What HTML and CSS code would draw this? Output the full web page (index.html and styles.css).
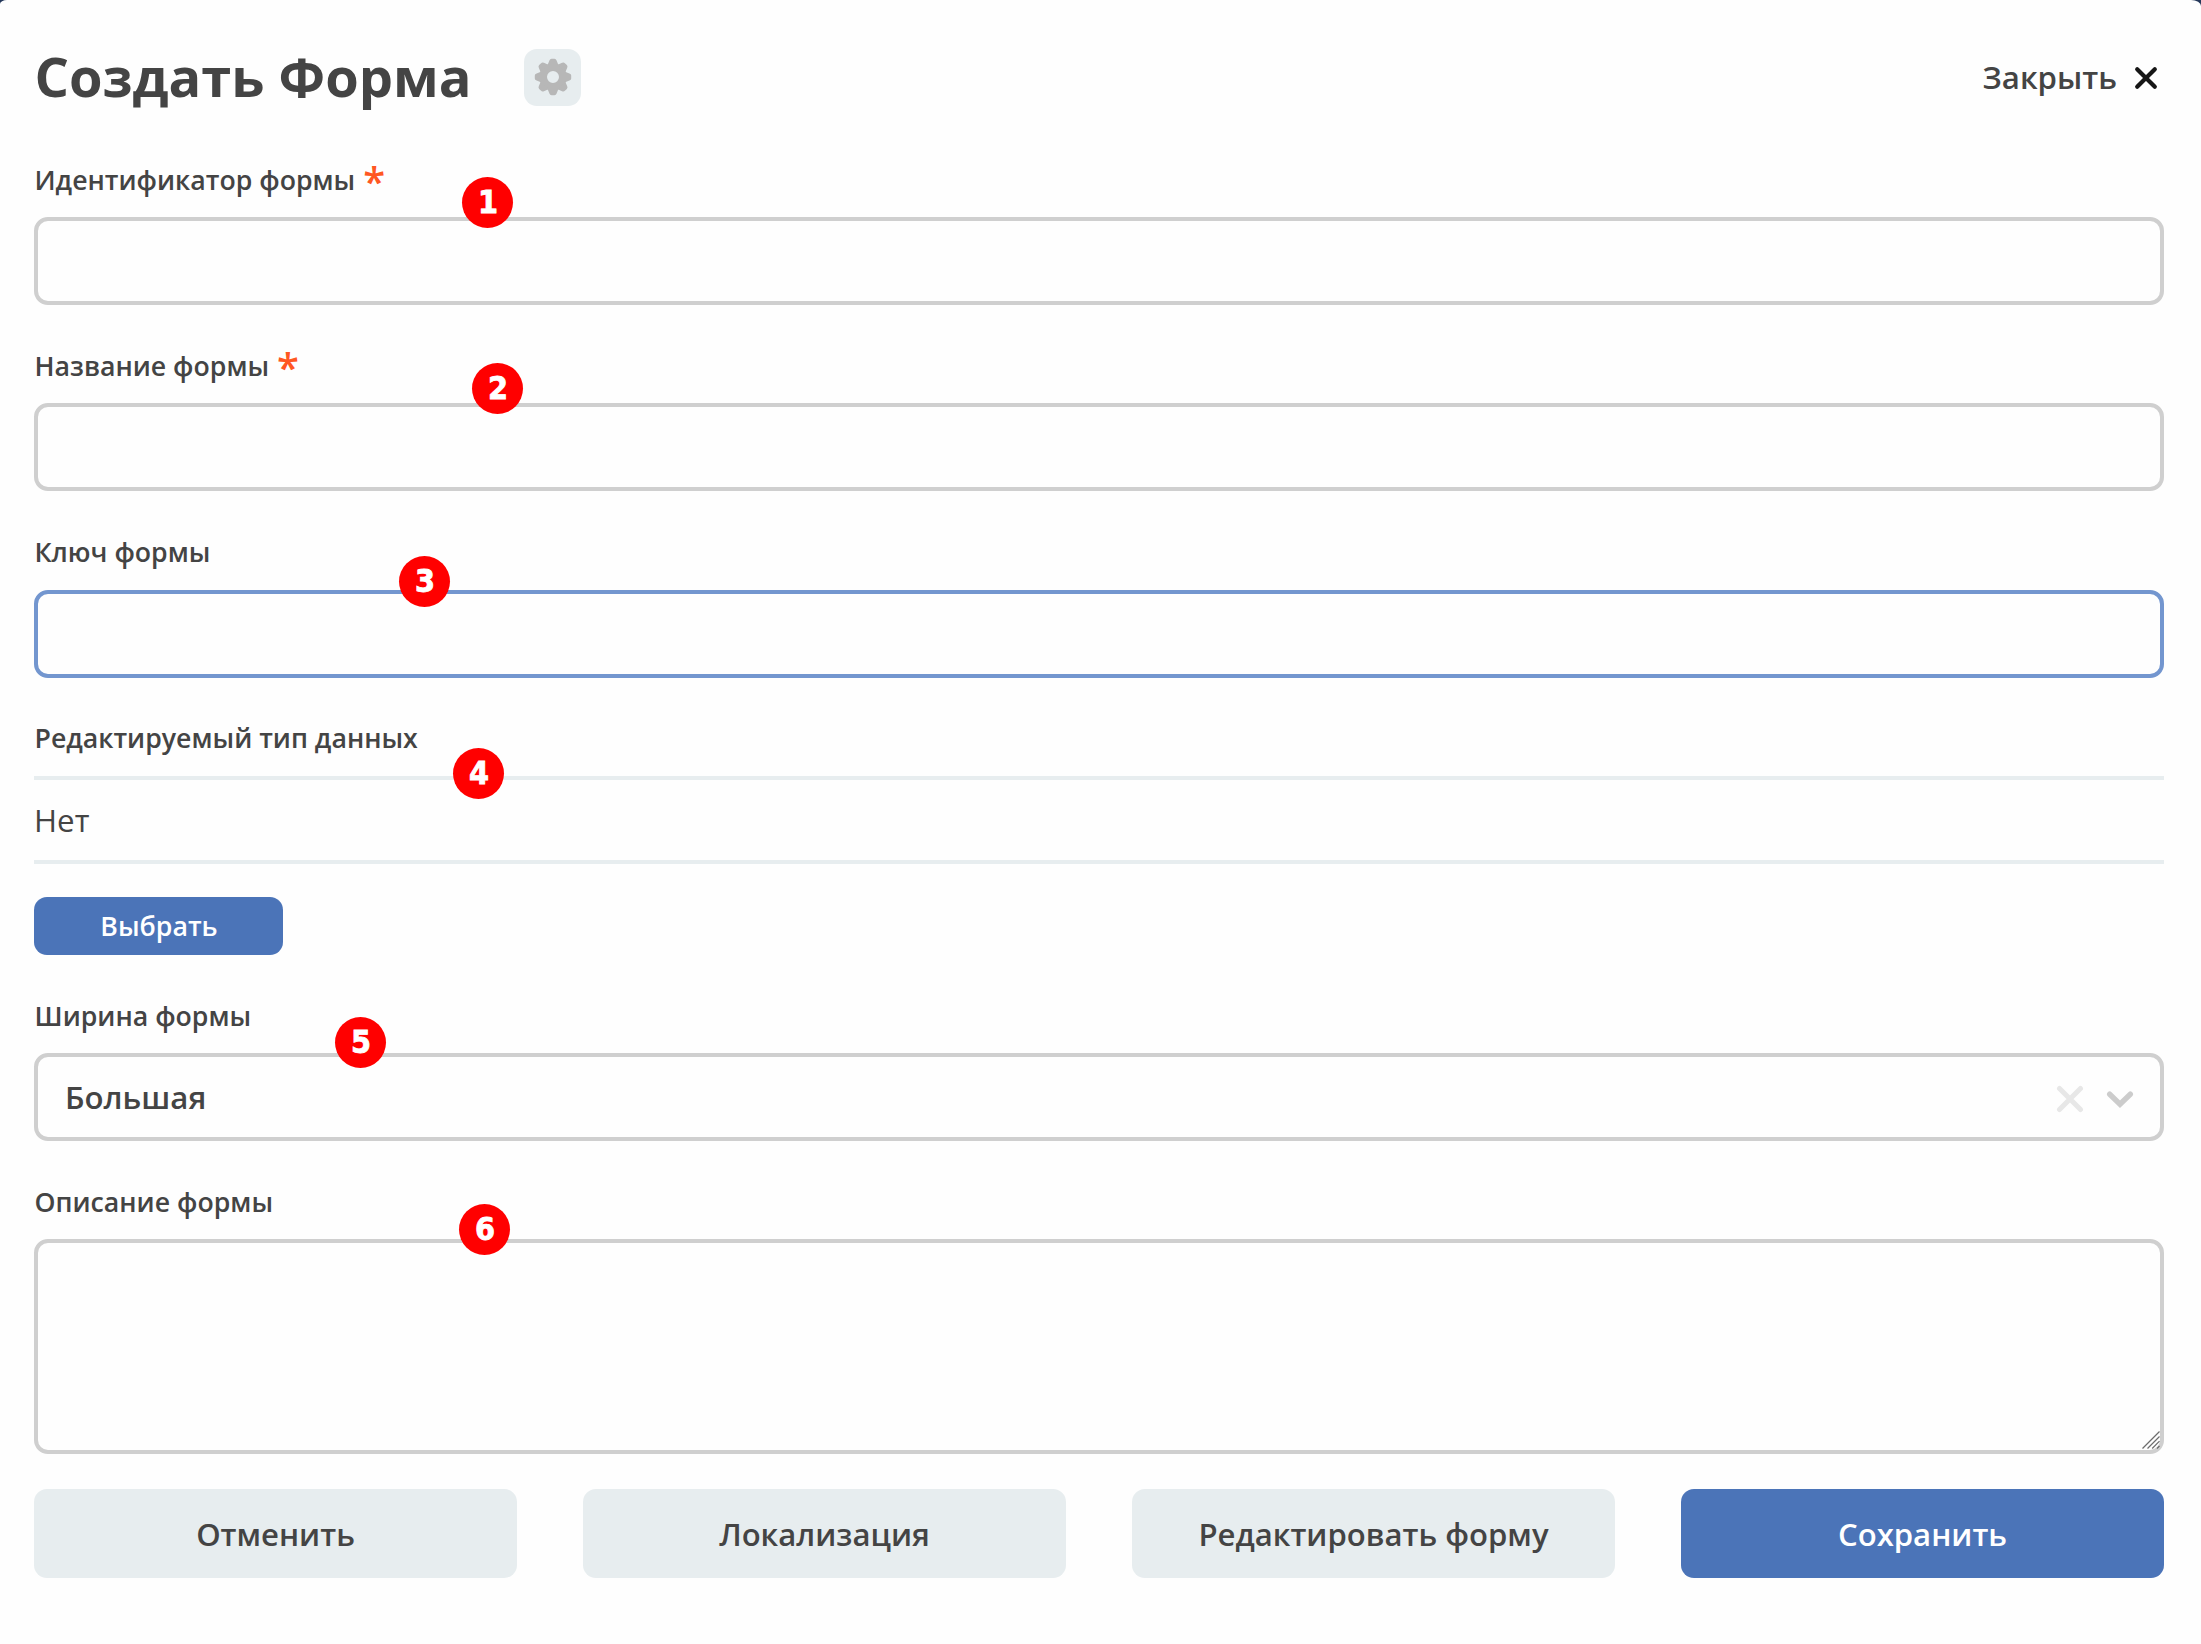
FILE: index.html
```html
<!DOCTYPE html>
<html lang="ru">
<head>
<meta charset="utf-8">
<title>Создать Форма</title>
<link rel="stylesheet" href="styles.css">
</head>
<body>
<main class="dialog">
  <header class="header">
    <h1 class="title">Создать Форма</h1>
    <button class="gear" type="button" aria-label="Настройки">
      <svg width="38" height="38" viewBox="-19 -19 38 38" fill="#b7b7b7">
        <defs><path id="tooth" d="M-5.6 -11.5 L-3.6 -16.4 Q-3 -18.2 -1.4 -18.2 H1.4 Q3 -18.2 3.6 -16.4 L5.6 -11.5 Z"/></defs>
        <circle r="9.8" fill="none" stroke="#b7b7b7" stroke-width="7.6"/>
        <use href="#tooth"/>
        <use href="#tooth" transform="rotate(45)"/>
        <use href="#tooth" transform="rotate(90)"/>
        <use href="#tooth" transform="rotate(135)"/>
        <use href="#tooth" transform="rotate(180)"/>
        <use href="#tooth" transform="rotate(225)"/>
        <use href="#tooth" transform="rotate(270)"/>
        <use href="#tooth" transform="rotate(315)"/>
      </svg>
    </button>
    <button class="close" type="button"><span class="close-text">Закрыть</span>
      <svg width="24" height="24" viewBox="0 0 24 24" fill="none" stroke="#161616" stroke-width="4.2" stroke-linecap="round"><path d="M3.2 3.2 20.8 20.8M20.8 3.2 3.2 20.8"/></svg>
    </button>
  </header>

  <section class="field">
    <label class="label" for="form-id">Идентификатор формы<span class="required">*</span></label>
    <input class="control" id="form-id" type="text">
  </section>
  <section class="field">
    <label class="label" for="form-name">Название формы<span class="required">*</span></label>
    <input class="control" id="form-name" type="text">
  </section>
  <section class="field field-key">
    <label class="label" for="form-key">Ключ формы</label>
    <input class="control control-active" id="form-key" type="text">
  </section>
  <section class="field field-type">
    <span class="label">Редактируемый тип данных</span>
    <div class="value">Нет</div>
    <button class="choose" type="button">Выбрать</button>
  </section>
  <section class="field">
    <span class="label">Ширина формы</span>
    <div class="control select">
      <span class="select-value">Большая</span>
      <svg width="28" height="28" viewBox="0 0 28 28" fill="none" stroke="#e7e7e7" stroke-width="5" stroke-linecap="round"><path d="M3.5 3.5 24.5 24.5M24.5 3.5 3.5 24.5"/></svg>
      <svg width="28" height="28" viewBox="0 0 28 28" fill="none" stroke="#cccccc" stroke-width="5.4" stroke-linecap="round"><path d="M3.7 9.2 14 19.2 24.3 9.2"/></svg>
    </div>
  </section>
  <section class="field field-text">
    <label class="label" for="form-text">Описание формы</label>
    <div class="area">
      <textarea class="control text" id="form-text"></textarea>
      <svg class="grip" width="18" height="18" viewBox="0 0 18 18" stroke="#6c6c6c" stroke-width="1.2"><path d="M.5 17.5 17.5 .5M5.5 17.5 17.5 5.5M10.2 17.5 17.5 10.2M15 17.5 17.5 15"/></svg>
    </div>
  </section>

  <footer class="actions">
    <button class="action" type="button">Отменить</button>
    <button class="action" type="button">Локализация</button>
    <button class="action" type="button">Редактировать форму</button>
    <button class="action primary" type="button">Сохранить</button>
  </footer>

  <span class="badge b1">1</span>
  <span class="badge b2">2</span>
  <span class="badge b3">3</span>
  <span class="badge b4">4</span>
  <span class="badge b5">5</span>
  <span class="badge b6">6</span>
</main>
</body>
</html>
```

FILE: styles.css
```css
* { box-sizing: border-box; }

body {
  margin: 0;
  background: #24385a;
  font-family: "Open Sans", "Noto Sans", sans-serif;
  color: #444;
}

button {
  margin: 0;
  padding: 0;
  border: 0;
  background: none;
  font: inherit;
  color: inherit;
}

svg { display: block; flex: none; }

.dialog {
  position: relative;
  height: 1644px;
  padding: 49px 37px 0 34px;
  background: #fefefe;
  border-radius: 7px 10px 0 0 / 4px 6px 0 0;
}

.header {
  display: flex;
  align-items: center;
  height: 57px;
  margin-bottom: 54px;
}

.title {
  width: 490px;
  margin: 0;
  padding: 0 0 3px .4px;
  font-size: 54.2px;
  line-height: 72px;
  font-weight: 700;
  white-space: nowrap;
}

.gear {
  display: flex;
  align-items: center;
  justify-content: center;
  width: 57px;
  height: 57px;
  padding-bottom: 1px;
  border-radius: 13px;
  background: #e7edef;
}

.close {
  display: flex;
  align-items: center;
  gap: 17px;
  margin-left: auto;
  padding-right: 6px;
  font-size: 31.2px;
  font-weight: 600;
}

.close-text { padding-bottom: 2px; }

.field {
  display: flex;
  flex-direction: column;
  margin-bottom: 41px;
}

.field-key { margin-bottom: 40px; }
.field-text { margin-bottom: 35px; }

.label {
  display: flex;
  gap: 8px;
  height: 40px;
  margin-bottom: 17px;
  padding-left: .5px;
  font-size: 26.7px;
  line-height: 40px;
  font-weight: 600;
}

.field-key .label { margin-bottom: 18px; }

.required {
  padding-top: 1px;
  font-size: 40px;
  font-weight: 600;
  color: #ff5722;
}

.control {
  width: 100%;
  height: 88px;
  margin: 0;
  border: 4px solid #cfcfcf;
  border-radius: 14px;
  background: #fefefe;
  outline: none;
}

.control-active { border-color: #7396cf; }

.field-type .label { margin-bottom: 18px; }

.value {
  height: 88px;
  border: solid #e7edef;
  border-width: 4px 0;
  font-size: 31.3px;
  line-height: 80px;
}

.choose {
  width: 249px;
  height: 58px;
  margin-top: 33px;
  padding: 0 0 2px 1px;
  border-radius: 13px;
  background: #4b74b8;
  color: #fff;
  font-size: 26.7px;
  font-weight: 600;
}

.select {
  display: flex;
  align-items: center;
  gap: 22px;
  padding: 0 26.5px 0 27px;
}

.select-value {
  flex: 1;
  font-size: 31.2px;
  font-weight: 600;
}

.select svg { margin-top: 4px; }

.area { position: relative; height: 215px; }

.text {
  display: block;
  height: 215px;
  resize: none;
}

.grip {
  position: absolute;
  right: 4px;
  bottom: 5px;
}

.actions {
  display: grid;
  grid-template-columns: repeat(4, 1fr);
  gap: 66px;
}

.action {
  height: 89px;
  border-radius: 13px;
  background: #e7edef;
  font-size: 31.1px;
  font-weight: 600;
}

.primary { background: #4b74b8; color: #fff; }

/* numbered callouts lying over the form */
.badge {
  position: absolute;
  width: 51px;
  height: 51px;
  border-radius: 50%;
  background: #f00;
  color: #fff;
  font: 700 32px/51px "DejaVu Sans Condensed", "DejaVu Sans", sans-serif;
  text-align: center;
  -webkit-text-stroke: .8px #fff;
}

.b1 { left: 462.4px; top: 177.4px; }
.b2 { left: 472.4px; top: 363.4px; }
.b3 { left: 399.4px; top: 556.4px; }
.b4 { left: 453.4px; top: 748.4px; }
.b5 { left: 335.4px; top: 1017.4px; }
.b6 { left: 459.4px; top: 1204.4px; }
```
